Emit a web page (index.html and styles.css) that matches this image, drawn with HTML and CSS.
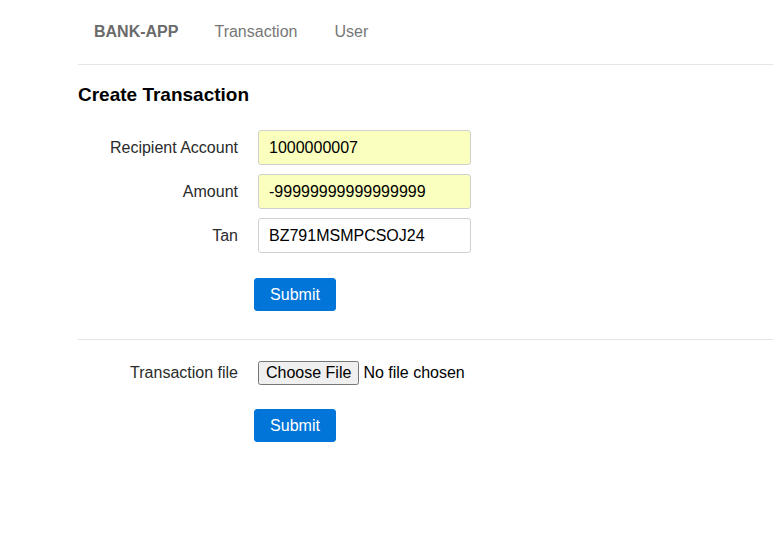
FILE: index.html
```html
<!DOCTYPE html>
<html>
<head>
<meta charset="utf-8">
<link rel="stylesheet" href="styles.css">
</head>
<body>
<div class="page">
  <nav class="nav">
    <a class="brand" href="#">BANK-APP</a>
    <a class="nav-link" href="#">Transaction</a>
    <a class="nav-link" href="#">User</a>
  </nav>
  <h5 class="title">Create Transaction</h5>
  <form class="form">
    <label class="label">Recipient Account</label>
    <input class="control filled" type="text" value="1000000007">
    <label class="label">Amount</label>
    <input class="control filled" type="text" value="-99999999999999999">
    <label class="label">Tan</label>
    <input class="control" type="text" value="BZ791MSMPCSOJ24">
    <span></span>
    <button class="btn" type="button">Submit</button>
  </form>
  <hr class="rule">
  <form class="form file-form">
    <label class="label">Transaction file</label>
    <input class="file" type="file">
    <span></span>
    <button class="btn" type="button">Submit</button>
  </form>
</div>
</body>
</html>
```
FILE: styles.css
```css
html, body {
  margin: 0;
  padding: 0;
  background: #fff;
}
body {
  font-family: "Liberation Sans", Arial, sans-serif;
  font-size: 16px;
  color: #292b2c;
}
.page {
  padding-left: 78px;
}
.nav {
  height: 64px;
  display: flex;
  align-items: center;
  padding-left: 16px;
  gap: 37px;
  border-bottom: 1px solid #e6e6e6;
  box-sizing: content-box;
}
.nav a {
  text-decoration: none;
  color: #777;
  line-height: 20px;
  font-size: 16px;
}
.brand {
  font-weight: bold;
  color: #6b6b6b !important;
  margin-right: -1px;
}
.title {
  margin: 19px 0 0;
  font-size: 19px;
  font-weight: bold;
  line-height: 22px;
  color: #000;
}
.form {
  display: grid;
  grid-template-columns: 160px 213px;
  column-gap: 20px;
  row-gap: 9px;
  align-items: center;
  margin-top: 24px;
}
.label {
  text-align: right;
  line-height: 20px;
}
.control {
  box-sizing: border-box;
  height: 35px;
  width: 213px;
  padding: 6px 10px;
  font-family: "Liberation Sans", Arial, sans-serif;
  font-size: 16px;
  color: #000;
  border: 1px solid #d0d0d0;
  border-radius: 3px;
  background: #fff;
  outline: none;
}
.control.filled {
  background: #faffbd;
}
.btn {
  justify-self: start;
  margin-left: -4px;
  margin-top: 16px;
  width: 82px;
  height: 33px;
  border: 1px solid #0275d8;
  background: #0275d8;
  color: #fff;
  border-radius: 3px;
  font-family: "Liberation Sans", Arial, sans-serif;
  font-size: 16px;
  padding: 0;
}
.rule {
  margin: 28px 0 0;
  border: 0;
  border-top: 1px solid #e6e6e6;
  height: 0;
}
.file-form {
  margin-top: 21px;
  row-gap: 8px;
}
.file {
  font-family: "Liberation Sans", Arial, sans-serif;
  font-size: 16px;
  color: #000;
}
```
